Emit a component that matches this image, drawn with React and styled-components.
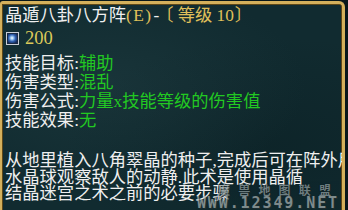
import React from "react";
import styled, {createGlobalStyle} from "styled-components";

const GlobalStyle = createGlobalStyle`
  html, body {
    margin: 0;
    padding: 0;
    background: #09171a;
  }
  body {
    width: 348px;
    height: 210px;
    overflow: hidden;
  }
`

const SERIF = `"Liberation Serif", "Noto Sans CJK SC", serif`

const Panel = styled.div`
  position: relative;
  box-sizing: border-box;
  margin: 1px 3px 0 0;
  height: 209px;
  padding: 1px 0 0 3px;
  border: 3px solid #d4b05c;
  border-left-width: 2px;
  border-bottom: none;
  border-radius: 3px 6px 0 0;
  box-shadow: inset 1px 1px 0 #5e4717, inset -1px 0 0 #5e4717;
  background:
    radial-gradient(ellipse at 30% 40%, rgba(40, 70, 75, 0.35), transparent 60%),
    radial-gradient(ellipse at 80% 70%, rgba(10, 30, 34, 0.5), transparent 55%),
    #112b30;
  overflow: hidden;
  font-family: ${SERIF};
  font-size: 17.3px;
  color: #efefef;
`

const Title = styled.div`
  line-height: 22px;
  white-space: nowrap;
`

const Gold = styled.span`
  color: #e0c05a;
  letter-spacing: ${p => p.$wide ? "1.5px" : "normal"};
`

const Dash = styled.span`
  margin-left: 1px;
`

const OpenBracket = styled.span`
  display: inline-block;
  margin-left: -3px;
  margin-right: -13px;
`

const BracketText = styled.span`
  margin-left: 17px;
`

const CloseBracket = styled.span`
  display: inline-block;
  margin-left: 1px;
  margin-right: -9px;
`

const ManaRow = styled.div`
  display: flex;
  align-items: center;
  gap: 6px;
  height: 22px;
  padding-left: 1px;
`

const ManaValue = styled.span`
  color: #dcc95a;
  font-size: 18.5px;
  line-height: 22px;
`

const Stats = styled.div`
  margin-top: 5px;
  line-height: 19px;
`

const StatRow = styled.div`
  white-space: nowrap;
`

const Value = styled.span`
  color: #22c922;
`

const Description = styled.div`
  margin-top: 23px;
  line-height: 16.5px;
`

const DescLine = styled.div`
  white-space: nowrap;
`

const Watermark = styled.div`
  position: absolute;
  right: 3px;
  bottom: -1px;
  display: flex;
  flex-direction: column;
  align-items: flex-end;
  pointer-events: none;
  opacity: 0.75;
`

const WatermarkCn = styled.div`
  display: flex;
  justify-content: space-between;
  width: 113px;
  margin-right: 8px;
  font-family: "Noto Sans CJK SC", sans-serif;
  font-weight: 700;
  font-size: 12px;
  line-height: 13px;
  color: #8d9b9d;
  text-shadow: 0 0 1px #000, 1px 1px 0 #1a2a2c;
`

const WatermarkUrl = styled.div`
  font-family: "DejaVu Sans Mono", monospace;
  font-weight: 700;
  font-size: 15px;
  line-height: 15px;
  letter-spacing: 1.9px;
  color: #a3acad;
  text-shadow: 1px 1px 0 #202d2f;
`

const ManaIcon = () => (
  <svg width="13" height="13" viewBox="0 0 13 13">
    <defs>
      <radialGradient id="orb" cx="45%" cy="45%" r="65%">
        <stop offset="0%" stopColor="#ffffff"/>
        <stop offset="25%" stopColor="#9cc8f2"/>
        <stop offset="60%" stopColor="#2f5fae"/>
        <stop offset="100%" stopColor="#142a5a"/>
      </radialGradient>
    </defs>
    <rect x="0.5" y="0.5" width="12" height="12" fill="#1a2a44" stroke="#c9ced6"/>
    <rect x="2" y="2" width="9" height="9" fill="url(#orb)"/>
  </svg>
)

const stats = [
  ["技能目标", "辅助"],
  ["伤害类型", "混乱"],
  ["伤害公式", "力量x技能等级的伤害值"],
  ["技能效果", "无"],
]

const description = [
  "从地里植入八角翠晶的种子,完成后可在阵外用",
  "水晶球观察敌人的动静.此术是使用晶循",
  "结晶迷宫之术之前的必要步骤",
]

export default function App() {
  return (
    <>
      <GlobalStyle/>
      <Panel>
        <Title>
          晶遁八卦八方阵<Gold $wide>(E)</Gold><Dash>-</Dash>
          <Gold>
            <OpenBracket>〔</OpenBracket>
            <BracketText>等级 10</BracketText>
            <CloseBracket>〕</CloseBracket>
          </Gold>
        </Title>
        <ManaRow>
          <ManaIcon/>
          <ManaValue>200</ManaValue>
        </ManaRow>
        <Stats>
          {stats.map(([label, value]) => (
            <StatRow key={label}>
              {label}:<Value>{value}</Value>
            </StatRow>
          ))}
        </Stats>
        <Description>
          {description.map(line => <DescLine key={line}>{line}</DescLine>)}
        </Description>
        <Watermark>
          <WatermarkCn>
            {"魔兽地图联盟".split("").map(ch => <span key={ch}>{ch}</span>)}
          </WatermarkCn>
          <WatermarkUrl>WWW.12349.NET</WatermarkUrl>
        </Watermark>
      </Panel>
    </>
  )
}
